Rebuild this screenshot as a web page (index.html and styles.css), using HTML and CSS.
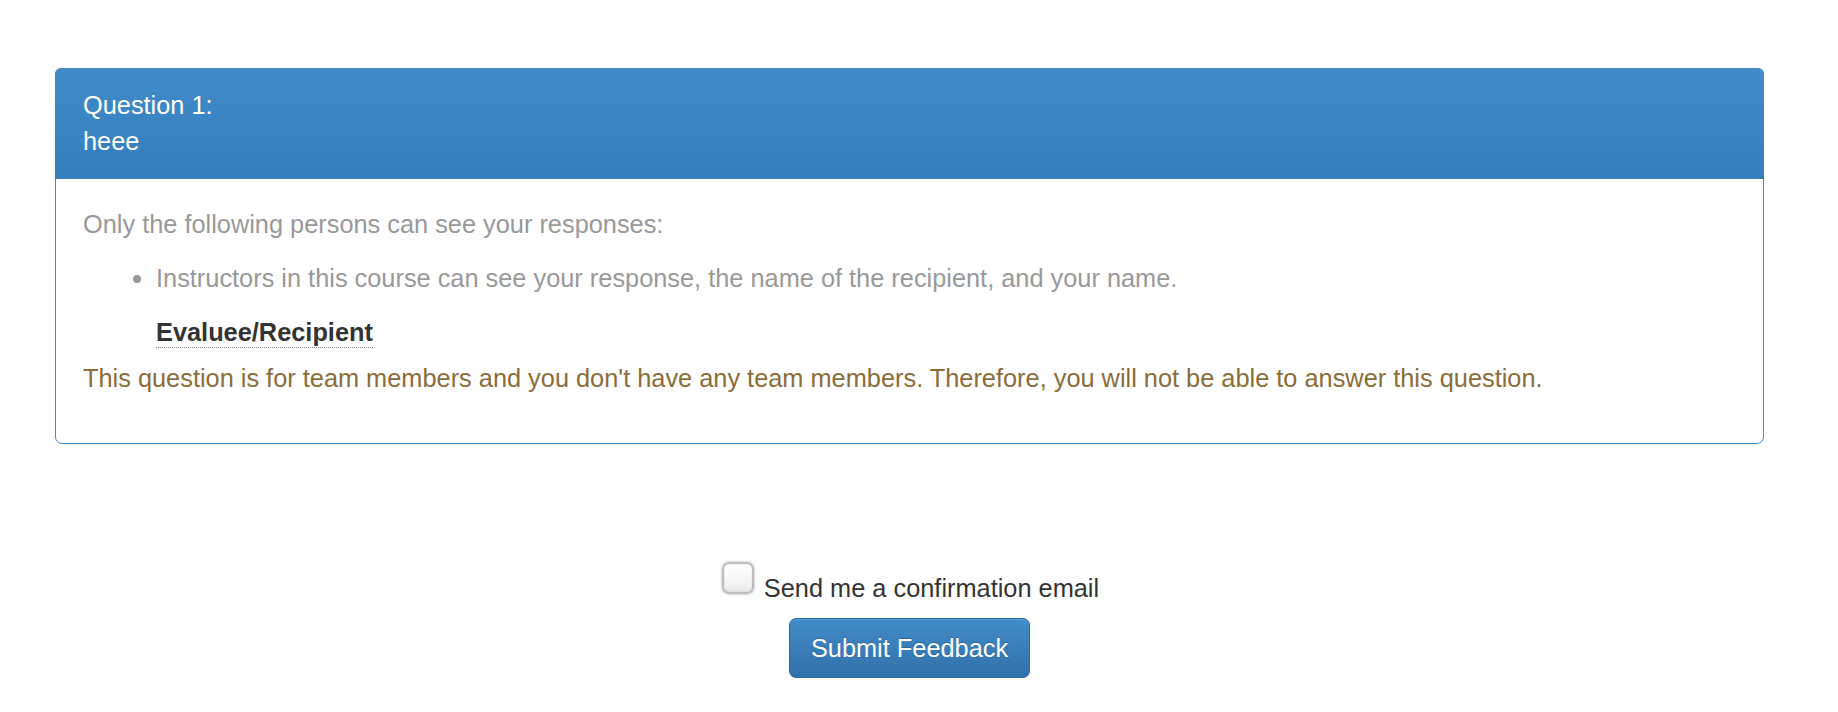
FILE: index.html
```html
<!DOCTYPE html>
<html lang="en">
<head>
<meta charset="utf-8">
<title>Feedback</title>
<link rel="stylesheet" href="styles.css">
</head>
<body>
<main class="page">
  <section class="panel">
    <div class="panel-heading">
      <div>Question 1:</div>
      <div>heee</div>
    </div>
    <div class="panel-body">
      <p class="muted">Only the following persons can see your responses:</p>
      <ul class="muted visibility">
        <li>Instructors in this course can see your response, the name of the recipient, and your name.</li>
      </ul>
      <div class="recipient"><span class="recipient-label">Evaluee/Recipient</span></div>
      <p class="warning">This question is for team members and you don't have any team members. Therefore, you will not be able to answer this question.</p>
    </div>
  </section>
  <div class="confirm-row">
    <input type="checkbox" class="confirm-box" id="confirm">
    <label for="confirm" class="confirm-label">Send me a confirmation email</label>
  </div>
  <div class="submit-row">
    <button class="btn-primary" type="button">Submit Feedback</button>
  </div>
</main>
</body>
</html>
```

FILE: styles.css
```css
html, body {
  margin: 0;
  padding: 0;
  background: #fff;
}
body {
  font-family: "Liberation Sans", Arial, Helvetica, sans-serif;
  font-size: 25.35px;
  line-height: 36px;
  color: #333;
}
.page {
  padding: 68px 74px 0 55px;
}
.panel {
  border: 1px solid #428bca;
  border-radius: 7px;
  background: #fff;
}
.panel-heading {
  color: #fff;
  background: linear-gradient(to bottom, #428bca 0%, #357ebd 100%);
  border-bottom: 1px solid #357ebd;
  border-radius: 6px 6px 0 0;
  padding: 19px 27px 19px 28px;
  margin: -1px -1px 0 -1px;
}
.panel-body {
  padding: 27px 27px 27px 27px;
}
.panel-body p {
  margin: 0 0 18px 0;
}
.muted {
  color: #999;
}
.visibility {
  margin: 0 0 18px 0;
  padding-left: 73px;
}
.visibility li::marker {
  font-size: 26px;
}
.recipient {
  padding-left: 73px;
}
.recipient-label {
  display: inline-block;
  line-height: 30px;
  font-weight: bold;
  color: #333;
  border-bottom: 1px dotted #888;
}
.panel-body .warning {
  color: #8a6d3b;
  margin-top: 10px;
  margin-bottom: 20px;
}
.confirm-row {
  display: flex;
  justify-content: center;
  align-items: flex-start;
  margin-top: 118px;
  padding-left: 2px;
}
.confirm-box {
  appearance: none;
  -webkit-appearance: none;
  width: 32px;
  height: 32px;
  margin: 0 10px 0 0;
  border: 2px solid #bdbdbd;
  border-radius: 7px;
  background: linear-gradient(to bottom, #ffffff 0%, #f6f6f6 60%, #e8e8e8 100%);
  box-shadow: 0 0 3px rgba(0, 0, 0, 0.3), inset 0 0 2px rgba(0, 0, 0, 0.12);
  box-sizing: border-box;
}
.confirm-label {
  margin-top: 8px;
  color: #333;
}
.submit-row {
  display: flex;
  justify-content: center;
  margin-top: 12px;
}
.btn-primary {
  font-family: "Liberation Sans", Arial, Helvetica, sans-serif;
  font-size: 25.35px;
  line-height: 36px;
  color: #fff;
  padding: 11px 21px;
  border: 1px solid #2d6ca2;
  border-radius: 7px;
  background: linear-gradient(to bottom, #428bca 0%, #3071a9 100%);
  text-shadow: 0 -1px 0 rgba(0, 0, 0, 0.2);
  box-shadow: inset 0 1px 0 rgba(255, 255, 255, 0.15), 0 1px 1px rgba(0, 0, 0, 0.075);
  cursor: pointer;
}
```
